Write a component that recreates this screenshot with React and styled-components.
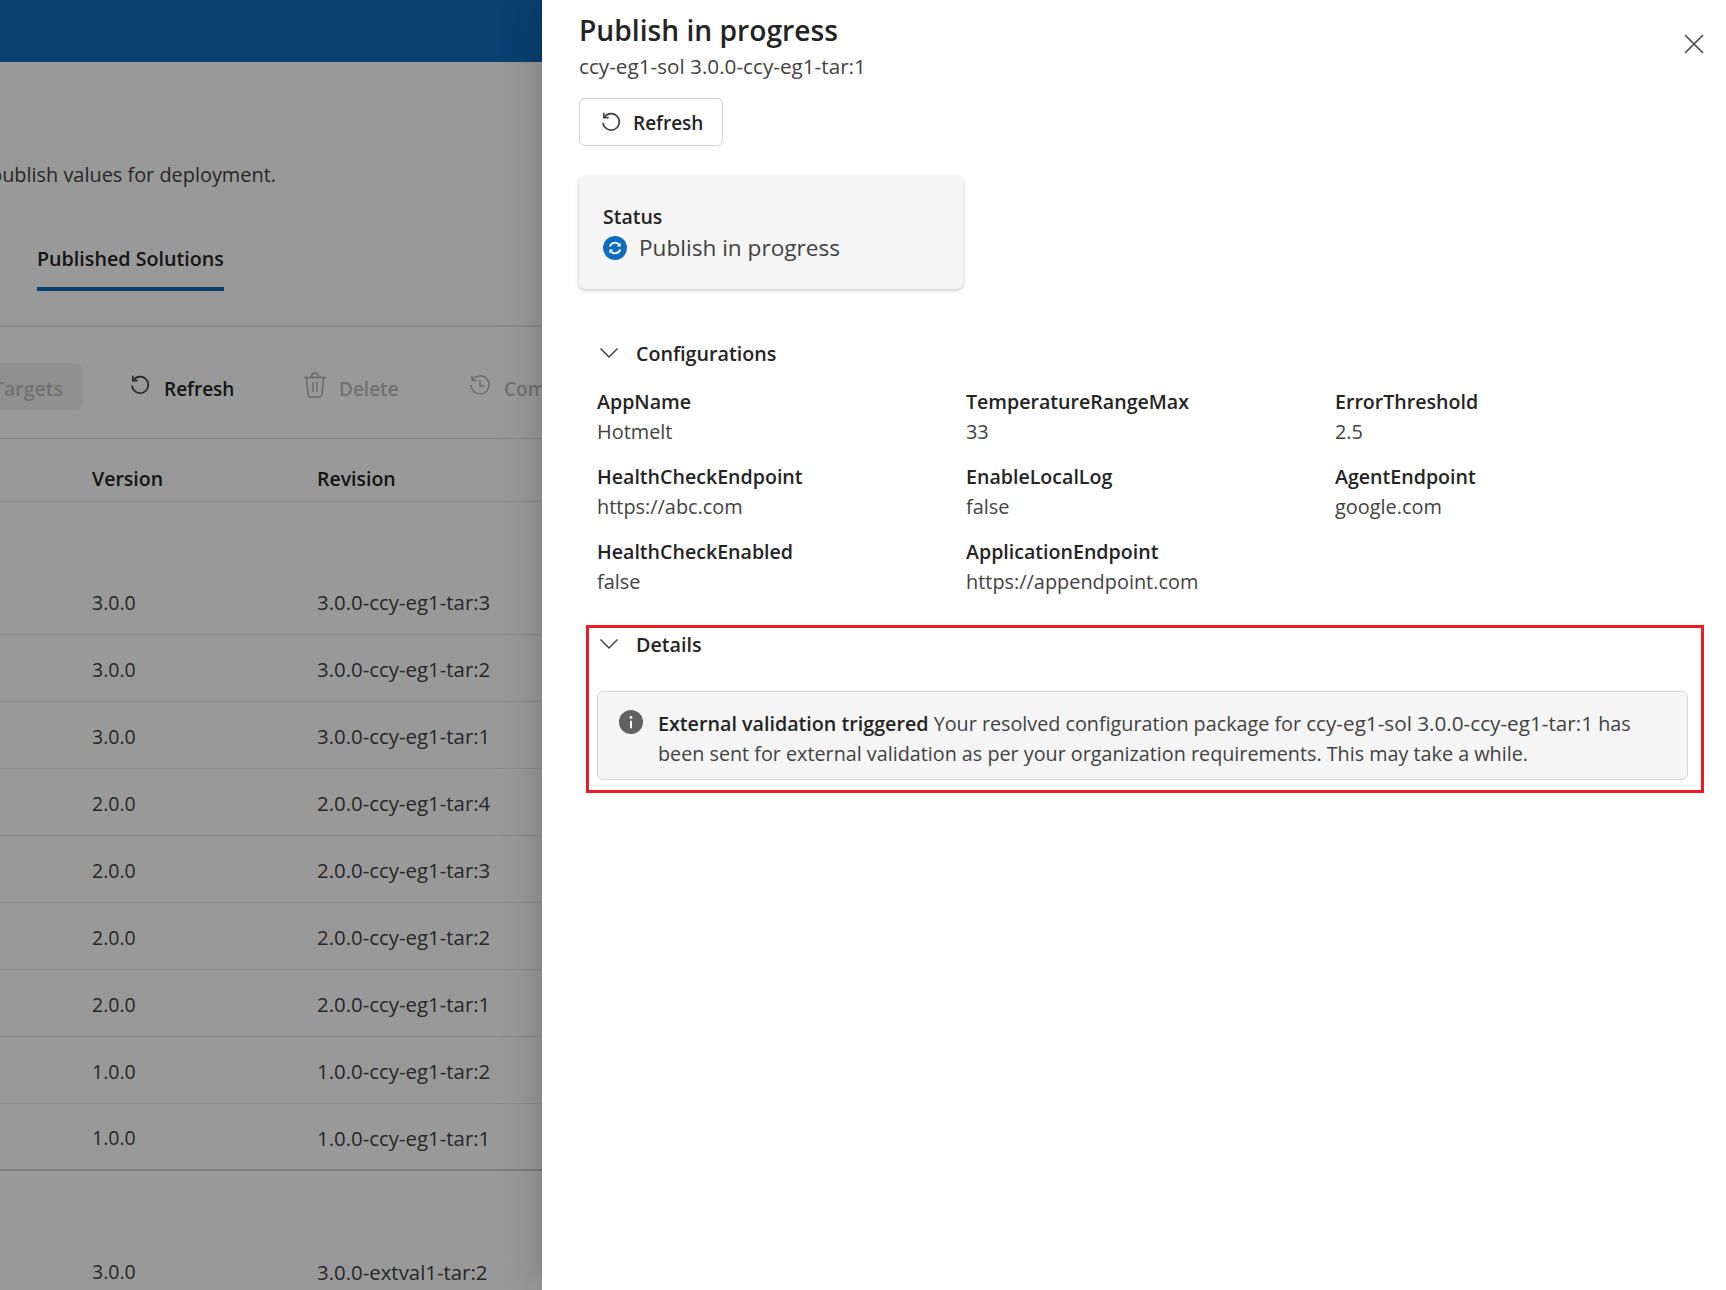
import React from 'react'
import styled, { createGlobalStyle } from 'styled-components'

const GlobalStyle = createGlobalStyle`
  html, body {
    margin: 0;
    padding: 0;
    background: #fff;
  }
  body {
    font-family: "Open Sans", "Noto Sans", "Liberation Sans", sans-serif;
    color: #242424;
  }
`;

const Page = styled.div`
  position: relative;
  width: 1726px;
  height: 1290px;
  overflow: hidden;
  display: flex;
`;

const Main = styled.main`
  width: 542px;
  flex: none;
  overflow: hidden;
  background: #fff;
`;

const TopBar = styled.div`
  height: 62px;
  background: #0f6cbd;
`;

const Description = styled.p`
  margin: 99px 0 0 -10px;
  height: 28px;
  font-size: 19.9px;
  line-height: 28px;
  white-space: nowrap;
  color: #424242;
`;

const Tabs = styled.div`
  display: flex;
  margin-top: 42px;
  padding-left: 37px;
  height: 96px;
  box-sizing: border-box;
  border-bottom: 2px solid #e4e4e4;
`;

const Tab = styled.div`
  height: 60px;
  padding-top: 14px;
  box-sizing: border-box;
  font-size: 19.7px;
  line-height: 28px;
  font-weight: 600;
  color: #242424;
  border-bottom: 4px solid #0f6cbd;
`;

const Toolbar = styled.div`
  display: flex;
  align-items: center;
  height: 112px;
  padding-top: 7px;
  box-sizing: border-box;
  border-bottom: 1px solid #e0e0e0;
  margin-left: -40px;
  white-space: nowrap;
`;

const ToolButton = styled.div`
  display: flex;
  align-items: center;
  flex: none;
  gap: ${p => p.$gap || 13}px;
  height: 47px;
  padding-top: 5px;
  border-radius: 6px;
  font-size: 19px;
  font-weight: 600;
  box-sizing: border-box;
  color: ${p => (p.$disabled ? '#bdbdbd' : '#242424')};
  background: ${p => (p.$filled ? '#f0f0f0' : 'transparent')};
`;

const TargetsButton = styled(ToolButton)`
  width: 122px;
  padding-left: 33px;
  margin-right: 47px;
  font-size: 19.5px;
`;

const RefreshTool = styled(ToolButton)`
  width: 174px;
`;

const DeleteTool = styled(ToolButton)`
  width: 166px;
`;

const IconBox = styled.span`
  display: inline-flex;
  flex: none;
  margin-top: -8px;
`;

const Row = styled.div`
  display: grid;
  grid-template-columns: 225px 1fr;
  padding-left: 92px;
  align-items: center;
  height: ${p => p.$height || 67}px;
  box-sizing: border-box;
  font-size: 20.4px;
  color: #424242;
  white-space: nowrap;
  border-bottom: ${p => (p.$noLine ? 'none' : p.$strong ? '2px solid #d0d0d0' : '1px solid #e6e6e6')};
  padding-top: ${p => p.$pushDown || 2}px;
`;

const VersionCell = styled.span`
  font-size: 19.5px;
`;

const HeadRow = styled(Row)`
  font-size: 19.5px;
  font-weight: 600;
  color: #242424;
  height: 63px;
  padding-top: 16px;
  padding-bottom: 0;
`;

const Overlay = styled.div`
  position: absolute;
  inset: 0;
  background: rgba(0, 0, 0, 0.4);
`;

const Drawer = styled.aside`
  position: absolute;
  top: 0;
  bottom: 0;
  left: 542px;
  right: 0;
  background: #fff;
  box-shadow: 0 0 40px rgba(0, 0, 0, 0.22);
  padding: 13px 22px 0 37px;
  box-sizing: border-box;
`;

const Title = styled.h1`
  margin: 0;
  font-size: 28.2px;
  line-height: 34px;
  font-weight: 600;
  color: #242424;
`;

const Subtitle = styled.div`
  margin-top: 5px;
  font-size: 20.7px;
  line-height: 28px;
  color: #424242;
`;

const CloseButton = styled.button`
  position: absolute;
  top: 34px;
  right: 22px;
  width: 20px;
  height: 20px;
  padding: 0;
  border: none;
  background: none;
  display: flex;
`;

const OutlineButton = styled.button`
  display: flex;
  align-items: center;
  gap: 11px;
  margin-top: 18px;
  width: 144px;
  height: 48px;
  padding: 0 0 0 20px;
  box-sizing: border-box;
  border: 1px solid #d1d1d1;
  border-radius: 6px;
  background: #fff;
  font-family: inherit;
  font-size: 19px;
  font-weight: 600;
  color: #242424;
`;

const ButtonLabel = styled.span`
  padding-top: 2px;
`;

const StatusCard = styled.div`
  margin-top: 30px;
  width: 384px;
  height: 113px;
  box-sizing: border-box;
  padding: 27px 24px 0;
  background: #f5f5f5;
  border-radius: 6px;
  box-shadow: 0 1px 3px rgba(0, 0, 0, 0.16), 0 2px 6px rgba(0, 0, 0, 0.1);
`;

const StatusLabel = styled.div`
  font-size: 19.5px;
  line-height: 28px;
  font-weight: 600;
  color: #242424;
`;

const StatusValue = styled.div`
  display: flex;
  align-items: center;
  gap: 12px;
  margin-top: 1px;
  font-size: 22.6px;
  line-height: 32px;
  color: #424242;
`;

const Section = styled.section`
  padding-left: 18px;
`;

const ConfigSection = styled(Section)`
  margin-top: 47px;
`;

const SectionHead = styled.div`
  display: flex;
  align-items: center;
  gap: 17px;
  height: 34px;
  padding-left: 2px;
  font-size: 19.7px;
  font-weight: 600;
  color: #242424;
`;

const ConfigGrid = styled.div`
  display: grid;
  grid-template-columns: repeat(3, 369px);
  grid-auto-rows: 75px;
  margin-top: 17px;
`;

const ConfigName = styled.div`
  font-size: 19.6px;
  line-height: 30px;
  font-weight: 600;
  color: #242424;
`;

const ConfigValue = styled.div`
  font-size: 19.9px;
  line-height: 30px;
  color: #424242;
`;

const DetailsBox = styled.section`
  position: relative;
  margin-top: 13px;
`;

const Highlight = styled.div`
  position: absolute;
  left: 7px;
  right: 0;
  top: 0;
  height: 168px;
  box-sizing: border-box;
  border: 3px solid #ed1c24;
  pointer-events: none;
`;

const DetailsInner = styled(Section)`
  padding-top: 2px;
`;

const Alert = styled.div`
  display: flex;
  gap: 15px;
  margin-top: 30px;
  width: 1091px;
  height: 89px;
  box-sizing: border-box;
  padding: 16px 16px 0 21px;
  background: #f5f5f5;
  border: 1px solid #d6d6d6;
  border-radius: 6px;
  font-size: 19.75px;
  line-height: 30px;
  color: #424242;
`;

const AlertText = styled.div`
  flex: 1;
  b {
    font-size: 19.7px;
    font-weight: 600;
    color: #242424;
  }
`;

const Identifier = styled.span`
  font-size: 20.7px;
`;

const InfoWrap = styled.span`
  display: inline-flex;
  flex: none;
  margin-top: 2px;
  height: 24px;
`;

const RefreshIcon = ({ color = '#424242' }) => (
  <svg width="22" height="22" viewBox="0 0 22 22" fill="none" stroke={color} strokeWidth="1.6">
    <path d="M4.4 6.2 A8.2 8.2 0 1 1 3 11.6" />
    <path d="M3.8 1.8 V6.6 H8.6" />
  </svg>
);

const TrashIcon = ({ color = '#b0b0b0' }) => (
  <svg width="24" height="26" viewBox="0 0 24 26" fill="none" stroke={color} strokeWidth="1.5">
    <path d="M1 5.5 H23 M3.5 5.5 L5 22 Q5.3 25 8 25 H16 Q18.7 25 19 22 L20.5 5.5" />
    <path d="M8.5 5.5 Q8.5 1 12 1 Q15.5 1 15.5 5.5 M10 10 V20 M14 10 V20" />
  </svg>
);

const HistoryIcon = ({ color = '#b0b0b0' }) => (
  <svg width="22" height="22" viewBox="0 0 22 22" fill="none" stroke={color} strokeWidth="1.4">
    <path d="M3.4 6 A9 9 0 1 1 2 11" />
    <path d="M3 1.8 V6.4 H7.6 M11 6 V12 H15" />
  </svg>
);

const Chevron = () => (
  <svg width="20" height="12" viewBox="0 0 20 12" fill="none" stroke="#424242" strokeWidth="1.5">
    <path d="M1.5 1.5 L10 10 L18.5 1.5" />
  </svg>
);

const CloseIcon = () => (
  <svg width="20" height="20" viewBox="0 0 20 20" fill="none" stroke="#4a4a4a" strokeWidth="1.7">
    <path d="M1 1 L19 19 M19 1 L1 19" />
  </svg>
);

const SyncBadge = () => (
  <svg width="24" height="24" viewBox="0 0 24 24" fill="none">
    <circle cx="12" cy="12" r="12" fill="#0f6cbd" />
    <path d="M6.8 10.6 A5.4 5.4 0 0 1 16.4 9" stroke="#fff" strokeWidth="1.8" />
    <path d="M17.2 13.4 A5.4 5.4 0 0 1 7.6 15" stroke="#fff" strokeWidth="1.8" />
    <path d="M17.6 6.4 V10.4 H13.6 Z M6.4 17.6 V13.6 H10.4 Z" fill="#fff" />
  </svg>
);

const InfoBadge = () => (
  <svg width="24" height="24" viewBox="0 0 24 24">
    <circle cx="12" cy="12" r="12" fill="#616161" />
    <circle cx="12" cy="7.4" r="1.4" fill="#fff" />
    <rect x="11" y="10.4" width="2" height="8" rx="1" fill="#fff" />
  </svg>
);

const rows = [
  ['3.0.0', '3.0.0-ccy-eg1-tar:3'],
  ['3.0.0', '3.0.0-ccy-eg1-tar:2'],
  ['3.0.0', '3.0.0-ccy-eg1-tar:1'],
  ['2.0.0', '2.0.0-ccy-eg1-tar:4'],
  ['2.0.0', '2.0.0-ccy-eg1-tar:3'],
  ['2.0.0', '2.0.0-ccy-eg1-tar:2'],
  ['2.0.0', '2.0.0-ccy-eg1-tar:1'],
  ['1.0.0', '1.0.0-ccy-eg1-tar:2'],
  ['1.0.0', '1.0.0-ccy-eg1-tar:1'],
];

const configs = [
  ['AppName', 'Hotmelt'],
  ['TemperatureRangeMax', '33'],
  ['ErrorThreshold', '2.5'],
  ['HealthCheckEndpoint', 'https://abc.com'],
  ['EnableLocalLog', 'false'],
  ['AgentEndpoint', 'google.com'],
  ['HealthCheckEnabled', 'false'],
  ['ApplicationEndpoint', 'https://appendpoint.com'],
];

export default function App() {
  return (
    <Page>
      <GlobalStyle />
      <Main>
        <TopBar />
        <Description>publish values for deployment.</Description>
        <Tabs>
          <Tab>Published Solutions</Tab>
        </Tabs>
        <Toolbar>
          <TargetsButton $filled $disabled>Targets</TargetsButton>
          <RefreshTool>
            <IconBox><RefreshIcon /></IconBox>
            Refresh
          </RefreshTool>
          <DeleteTool $disabled $gap={12}>
            <IconBox><TrashIcon /></IconBox>
            Delete
          </DeleteTool>
          <ToolButton $disabled>
            <IconBox><HistoryIcon /></IconBox>
            Compare
          </ToolButton>
        </Toolbar>
        <HeadRow>
          <span>Version</span>
          <span>Revision</span>
        </HeadRow>
        {rows.map(([version, revision], i) => (
          <Row
            key={revision}
            $height={i === 0 ? 133 : 67}
            $pushDown={i === 0 ? 68 : 2}
            $strong={i === rows.length - 1}
          >
            <VersionCell>{version}</VersionCell>
            <span>{revision}</span>
          </Row>
        ))}
        <Row $height={133} $pushDown={68} $noLine>
          <VersionCell>3.0.0</VersionCell>
          <span>3.0.0-extval1-tar:2</span>
        </Row>
      </Main>
      <Overlay />
      <Drawer>
        <Title>Publish in progress</Title>
        <Subtitle>ccy-eg1-sol 3.0.0-ccy-eg1-tar:1</Subtitle>
        <CloseButton aria-label="Close"><CloseIcon /></CloseButton>
        <OutlineButton>
          <RefreshIcon />
          <ButtonLabel>Refresh</ButtonLabel>
        </OutlineButton>
        <StatusCard>
          <StatusLabel>Status</StatusLabel>
          <StatusValue>
            <SyncBadge />
            Publish in progress
          </StatusValue>
        </StatusCard>
        <ConfigSection>
          <SectionHead>
            <Chevron />
            Configurations
          </SectionHead>
          <ConfigGrid>
            {configs.map(([name, value]) => (
              <div key={name}>
                <ConfigName>{name}</ConfigName>
                <ConfigValue>{value}</ConfigValue>
              </div>
            ))}
          </ConfigGrid>
        </ConfigSection>
        <DetailsBox>
          <Highlight />
          <DetailsInner>
            <SectionHead>
              <Chevron />
              Details
            </SectionHead>
            <Alert>
              <InfoWrap><InfoBadge /></InfoWrap>
              <AlertText>
                <b>External validation triggered</b> Your resolved configuration package for <Identifier>ccy-eg1-sol 3.0.0-ccy-eg1-tar:1</Identifier> has been sent for external validation as per your organization requirements. This may take a while.
              </AlertText>
            </Alert>
          </DetailsInner>
        </DetailsBox>
      </Drawer>
    </Page>
  )
}
